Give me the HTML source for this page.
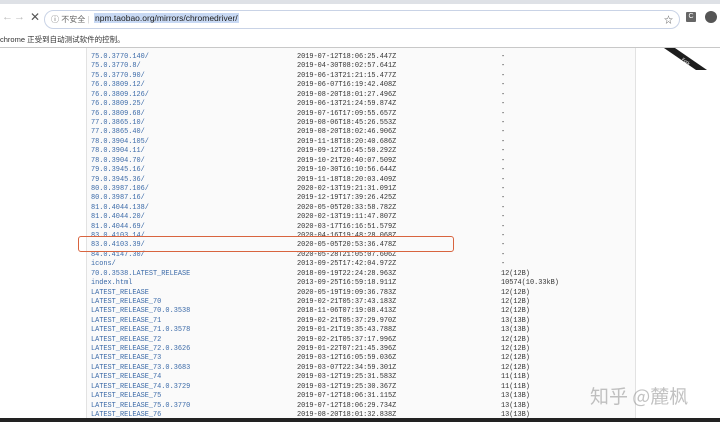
<!DOCTYPE html>
<html><head><meta charset="utf-8"><style>
*{margin:0;padding:0;box-sizing:border-box}
body{width:720px;height:422px;overflow:hidden;background:#fff;position:relative;font-family:"Liberation Sans","Noto Sans CJK SC",sans-serif}
.tabs{position:absolute;left:0;top:0;width:720px;height:4px;background:#dee1e6}
.tool{position:absolute;left:0;top:4px;width:720px;height:28px;background:#fff}
.url{position:absolute;left:44px;top:6px;width:636px;height:19px;border:1px solid #c9d3e6;border-radius:10px;background:#fff}
.info{position:absolute;left:0;top:32px;width:720px;height:16px;background:#fff;border-bottom:1px solid #c8c8c8;font-size:7.5px;color:#333;line-height:16px}
.panel{position:absolute;left:86px;top:48px;width:550px;height:370px;background:#fafafa;border-left:1px solid #e2e2e2;border-right:1px solid #e2e2e2}
#rows{position:absolute;left:0;top:3px;width:720px;height:419px}
.r{position:absolute;font-family:"Liberation Mono",monospace;font-size:6.9px;line-height:9px;white-space:pre;font-weight:500}
.n{left:91px;color:#3b6aa8}
.d{left:297px;color:#333}
.s{left:501px;color:#333}
.box{position:absolute;left:78px;top:236px;width:376px;height:16px;border:1.5px solid #d8643f;border-radius:3px}
.bot{position:absolute;left:0;top:418px;width:720px;height:4px;background:#222}
.wm{position:absolute;left:590px;top:382px;font-size:19px;color:rgba(120,120,120,.45);font-family:"Noto Sans CJK SC",sans-serif}
</style></head><body>
<div class="tabs"></div>
<div class="tool">
<div style="position:absolute;left:2px;top:7px;font-size:11px;color:#bbb">&#8592;</div>
<div style="position:absolute;left:14px;top:7px;font-size:11px;color:#bbb">&#8594;</div>
<div style="position:absolute;left:30px;top:6px;font-size:12px;color:#555">&#10005;</div>
<div class="url">
<span style="position:absolute;left:6px;top:3px;font-size:8px;color:#666">&#9432; 不安全 <span style="color:#ccc">|</span></span>
<span style="position:absolute;left:49px;top:2px;font-size:8.5px;color:#222;background:#c8d9f4;padding:0 1px">npm.taobao.org/mirrors/chromedriver/</span>
<span style="position:absolute;right:6px;top:2px;font-size:9px;color:#555">&#9734;</span>
</div>
<div style="position:absolute;left:686px;top:8px;width:10px;height:10px;background:#666;border-radius:1px;color:#fff;font-size:7px;text-align:center;line-height:10px">C</div>
<div style="position:absolute;left:705px;top:7px;width:12px;height:12px;border-radius:6px;background:#555"></div>
</div>
<div class="info">chrome 正受到自动测试软件的控制。</div>
<div class="panel"></div>
<svg style="position:absolute;left:660px;top:48px" width="60" height="30"><polygon points="4,0 15,0 47,22 36,22" fill="#1d1d1d"/><text x="22" y="14" fill="#fff" font-size="4.5" transform="rotate(36 25 12)" font-family="Liberation Sans">Fork</text></svg>
<div id="rows">
<div class="r n" style="top:50px">75.0.3770.140/</div><div class="r d" style="top:50px">2019-07-12T18:06:25.447Z</div><div class="r s" style="top:50px">-</div>
<div class="r n" style="top:59.4px">75.0.3770.8/</div><div class="r d" style="top:59.4px">2019-04-30T08:02:57.641Z</div><div class="r s" style="top:59.4px">-</div>
<div class="r n" style="top:68.8px">75.0.3770.90/</div><div class="r d" style="top:68.8px">2019-06-13T21:21:15.477Z</div><div class="r s" style="top:68.8px">-</div>
<div class="r n" style="top:78.3px">76.0.3809.12/</div><div class="r d" style="top:78.3px">2019-06-07T16:19:42.408Z</div><div class="r s" style="top:78.3px">-</div>
<div class="r n" style="top:87.7px">76.0.3809.126/</div><div class="r d" style="top:87.7px">2019-08-20T18:01:27.496Z</div><div class="r s" style="top:87.7px">-</div>
<div class="r n" style="top:97.1px">76.0.3809.25/</div><div class="r d" style="top:97.1px">2019-06-13T21:24:59.874Z</div><div class="r s" style="top:97.1px">-</div>
<div class="r n" style="top:106.5px">76.0.3809.68/</div><div class="r d" style="top:106.5px">2019-07-16T17:09:55.657Z</div><div class="r s" style="top:106.5px">-</div>
<div class="r n" style="top:115.9px">77.0.3865.10/</div><div class="r d" style="top:115.9px">2019-08-06T18:45:26.553Z</div><div class="r s" style="top:115.9px">-</div>
<div class="r n" style="top:125.4px">77.0.3865.40/</div><div class="r d" style="top:125.4px">2019-08-20T18:02:46.906Z</div><div class="r s" style="top:125.4px">-</div>
<div class="r n" style="top:134.8px">78.0.3904.105/</div><div class="r d" style="top:134.8px">2019-11-18T18:20:40.686Z</div><div class="r s" style="top:134.8px">-</div>
<div class="r n" style="top:144.2px">78.0.3904.11/</div><div class="r d" style="top:144.2px">2019-09-12T16:45:50.292Z</div><div class="r s" style="top:144.2px">-</div>
<div class="r n" style="top:153.6px">78.0.3904.70/</div><div class="r d" style="top:153.6px">2019-10-21T20:40:07.509Z</div><div class="r s" style="top:153.6px">-</div>
<div class="r n" style="top:163px">79.0.3945.16/</div><div class="r d" style="top:163px">2019-10-30T16:10:56.644Z</div><div class="r s" style="top:163px">-</div>
<div class="r n" style="top:172.5px">79.0.3945.36/</div><div class="r d" style="top:172.5px">2019-11-18T18:20:03.409Z</div><div class="r s" style="top:172.5px">-</div>
<div class="r n" style="top:181.9px">80.0.3987.106/</div><div class="r d" style="top:181.9px">2020-02-13T19:21:31.091Z</div><div class="r s" style="top:181.9px">-</div>
<div class="r n" style="top:191.3px">80.0.3987.16/</div><div class="r d" style="top:191.3px">2019-12-19T17:39:26.425Z</div><div class="r s" style="top:191.3px">-</div>
<div class="r n" style="top:200.7px">81.0.4044.138/</div><div class="r d" style="top:200.7px">2020-05-05T20:33:58.782Z</div><div class="r s" style="top:200.7px">-</div>
<div class="r n" style="top:210.1px">81.0.4044.20/</div><div class="r d" style="top:210.1px">2020-02-13T19:11:47.807Z</div><div class="r s" style="top:210.1px">-</div>
<div class="r n" style="top:219.6px">81.0.4044.69/</div><div class="r d" style="top:219.6px">2020-03-17T16:16:51.579Z</div><div class="r s" style="top:219.6px">-</div>
<div class="r n" style="top:229px">83.0.4103.14/</div><div class="r d" style="top:229px">2020-04-16T19:48:28.068Z</div><div class="r s" style="top:229px">-</div>
<div class="r n" style="top:238.4px">83.0.4103.39/</div><div class="r d" style="top:238.4px">2020-05-05T20:53:36.478Z</div><div class="r s" style="top:238.4px">-</div>
<div class="r n" style="top:247.8px">84.0.4147.30/</div><div class="r d" style="top:247.8px">2020-05-28T21:05:07.606Z</div><div class="r s" style="top:247.8px">-</div>
<div class="r n" style="top:257.2px">icons/</div><div class="r d" style="top:257.2px">2013-09-25T17:42:04.972Z</div><div class="r s" style="top:257.2px">-</div>
<div class="r n" style="top:266.7px">70.0.3538.LATEST_RELEASE</div><div class="r d" style="top:266.7px">2018-09-19T22:24:28.963Z</div><div class="r s" style="top:266.7px">12(12B)</div>
<div class="r n" style="top:276.1px">index.html</div><div class="r d" style="top:276.1px">2013-09-25T16:59:18.911Z</div><div class="r s" style="top:276.1px">10574(10.33kB)</div>
<div class="r n" style="top:285.5px">LATEST_RELEASE</div><div class="r d" style="top:285.5px">2020-05-19T19:09:36.783Z</div><div class="r s" style="top:285.5px">12(12B)</div>
<div class="r n" style="top:294.9px">LATEST_RELEASE_70</div><div class="r d" style="top:294.9px">2019-02-21T05:37:43.183Z</div><div class="r s" style="top:294.9px">12(12B)</div>
<div class="r n" style="top:304.3px">LATEST_RELEASE_70.0.3538</div><div class="r d" style="top:304.3px">2018-11-06T07:19:08.413Z</div><div class="r s" style="top:304.3px">12(12B)</div>
<div class="r n" style="top:313.8px">LATEST_RELEASE_71</div><div class="r d" style="top:313.8px">2019-02-21T05:37:29.970Z</div><div class="r s" style="top:313.8px">13(13B)</div>
<div class="r n" style="top:323.2px">LATEST_RELEASE_71.0.3578</div><div class="r d" style="top:323.2px">2019-01-21T19:35:43.788Z</div><div class="r s" style="top:323.2px">13(13B)</div>
<div class="r n" style="top:332.6px">LATEST_RELEASE_72</div><div class="r d" style="top:332.6px">2019-02-21T05:37:17.996Z</div><div class="r s" style="top:332.6px">12(12B)</div>
<div class="r n" style="top:342px">LATEST_RELEASE_72.0.3626</div><div class="r d" style="top:342px">2019-01-22T07:21:45.396Z</div><div class="r s" style="top:342px">12(12B)</div>
<div class="r n" style="top:351.4px">LATEST_RELEASE_73</div><div class="r d" style="top:351.4px">2019-03-12T16:05:59.036Z</div><div class="r s" style="top:351.4px">12(12B)</div>
<div class="r n" style="top:360.9px">LATEST_RELEASE_73.0.3683</div><div class="r d" style="top:360.9px">2019-03-07T22:34:59.301Z</div><div class="r s" style="top:360.9px">12(12B)</div>
<div class="r n" style="top:370.3px">LATEST_RELEASE_74</div><div class="r d" style="top:370.3px">2019-03-12T19:25:31.583Z</div><div class="r s" style="top:370.3px">11(11B)</div>
<div class="r n" style="top:379.7px">LATEST_RELEASE_74.0.3729</div><div class="r d" style="top:379.7px">2019-03-12T19:25:30.367Z</div><div class="r s" style="top:379.7px">11(11B)</div>
<div class="r n" style="top:389.1px">LATEST_RELEASE_75</div><div class="r d" style="top:389.1px">2019-07-12T18:06:31.115Z</div><div class="r s" style="top:389.1px">13(13B)</div>
<div class="r n" style="top:398.5px">LATEST_RELEASE_75.0.3770</div><div class="r d" style="top:398.5px">2019-07-12T18:06:29.734Z</div><div class="r s" style="top:398.5px">13(13B)</div>
<div class="r n" style="top:408px">LATEST_RELEASE_76</div><div class="r d" style="top:408px">2019-08-20T18:01:32.838Z</div><div class="r s" style="top:408px">13(13B)</div>
</div>
<div class="box"></div>
<div class="wm">知乎 @麓枫</div>
<div class="bot"></div>
</body></html>
